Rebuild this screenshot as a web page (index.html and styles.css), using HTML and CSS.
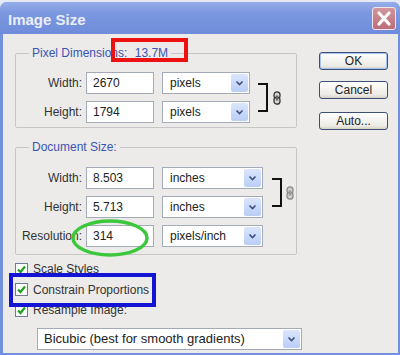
FILE: index.html
```html
<!DOCTYPE html>
<html>
<head>
<meta charset="utf-8">
<link rel="stylesheet" href="styles.css">
</head>
<body>
<div class="window">
  <div class="titlebar">
    <span class="title">Image Size</span>
    <span class="close">
      <svg width="24" height="23" viewBox="0 0 24 23">
        <path d="M7 6 L17 17 M17 6 L7 17" stroke="#fff" stroke-width="3.2" stroke-linecap="round"/>
      </svg>
    </span>
  </div>
  <div class="content">
    <div class="main">
      <fieldset class="group">
        <legend>Pixel Dimensions: <span class="size">13.7M</span></legend>
        <div class="linked pix">
          <div class="rows">
            <div class="row"><span class="label">Width:</span><span class="input">2670</span><span class="select">pixels<span class="arrow"><svg width="9" height="6" viewBox="0 0 9 6"><path d="M1.5 1.5 L4.5 4.5 L7.5 1.5" fill="none" stroke="#3c4f7a" stroke-width="1.6"/></svg></span></span></div>
            <div class="row"><span class="label">Height:</span><span class="input">1794</span><span class="select">pixels<span class="arrow"><svg width="9" height="6" viewBox="0 0 9 6"><path d="M1.5 1.5 L4.5 4.5 L7.5 1.5" fill="none" stroke="#3c4f7a" stroke-width="1.6"/></svg></span></span></div>
          </div>
          <span class="bracket"></span>
          <svg class="link" width="8" height="14" viewBox="0 0 8 14"><rect x="1" y="0.8" width="6" height="7" rx="3" fill="#d8d8d8" stroke="#333" stroke-width="1.3"/><rect x="1" y="6.2" width="6" height="7" rx="3" fill="#d8d8d8" stroke="#333" stroke-width="1.3"/><rect x="2.8" y="4.5" width="2.4" height="5" fill="#666"/></svg>
        </div>
      </fieldset>
      <fieldset class="group doc">
        <legend>Document Size:</legend>
        <div class="doc-inner">
          <div class="linked">
            <div class="rows">
              <div class="row"><span class="label">Width:</span><span class="input">8.503</span><span class="select wide">inches<span class="arrow"><svg width="9" height="6" viewBox="0 0 9 6"><path d="M1.5 1.5 L4.5 4.5 L7.5 1.5" fill="none" stroke="#3c4f7a" stroke-width="1.6"/></svg></span></span></div>
              <div class="row"><span class="label">Height:</span><span class="input">5.713</span><span class="select wide">inches<span class="arrow"><svg width="9" height="6" viewBox="0 0 9 6"><path d="M1.5 1.5 L4.5 4.5 L7.5 1.5" fill="none" stroke="#3c4f7a" stroke-width="1.6"/></svg></span></span></div>
            </div>
            <span class="bracket doc-bracket"></span>
            <svg class="link doc-link" width="8" height="14" viewBox="0 0 8 14"><rect x="1" y="0.8" width="6" height="7" rx="3" fill="#cfcfcf" stroke="#8a8a8a" stroke-width="1.3"/><rect x="1" y="6.2" width="6" height="7" rx="3" fill="#cfcfcf" stroke="#8a8a8a" stroke-width="1.3"/><rect x="2.8" y="4.5" width="2.4" height="5" fill="#9a9a9a"/></svg>
          </div>
          <div class="row"><span class="label">Resolution:</span><span class="input">314</span><span class="select wide">pixels/inch<span class="arrow"><svg width="9" height="6" viewBox="0 0 9 6"><path d="M1.5 1.5 L4.5 4.5 L7.5 1.5" fill="none" stroke="#3c4f7a" stroke-width="1.6"/></svg></span></span></div>
        </div>
      </fieldset>
      <div class="checks">
        <div class="check"><span class="box"><svg width="11" height="11" viewBox="0 0 11 11"><path d="M2 5.5 L4.5 8 L9 2.5" fill="none" stroke="#1fa01f" stroke-width="2.2"/></svg></span>Scale Styles</div>
        <div class="check"><span class="box"><svg width="11" height="11" viewBox="0 0 11 11"><path d="M2 5.5 L4.5 8 L9 2.5" fill="none" stroke="#1fa01f" stroke-width="2.2"/></svg></span>Constrain Proportions</div>
        <div class="check"><span class="box"><svg width="11" height="11" viewBox="0 0 11 11"><path d="M2 5.5 L4.5 8 L9 2.5" fill="none" stroke="#1fa01f" stroke-width="2.2"/></svg></span>Resample Image:</div>
      </div>
      <div class="select method">Bicubic (best for smooth gradients)<span class="arrow"><svg width="9" height="6" viewBox="0 0 9 6"><path d="M1.5 1.5 L4.5 4.5 L7.5 1.5" fill="none" stroke="#3c4f7a" stroke-width="1.6"/></svg></span></div>
    </div>
    <div class="buttons">
      <span class="btn default">OK</span>
      <span class="btn">Cancel</span>
      <span class="btn auto">Auto...</span>
    </div>
  </div>
</div>
<span class="mark red"></span>
<svg class="mark green" width="80" height="40" viewBox="0 0 80 40"><ellipse cx="40" cy="20" rx="37" ry="17" fill="none" stroke="#3cc83c" stroke-width="3.5"/></svg>
<span class="mark blue"></span>
</body>
</html>
```
FILE: styles.css
```css
html, body {
  margin: 0;
  padding: 0;
}
body {
  width: 400px;
  height: 355px;
  overflow: hidden;
  background: #e4e9f3;
  font-family: "Liberation Sans", Arial, sans-serif;
  font-size: 12px;
  color: #2a2a2a;
  position: relative;
}
.window {
  margin-top: 2px;
  height: 353px;
  box-sizing: border-box;
  background: #7390dc;
  border-radius: 7px 7px 0 0;
  padding: 0 2px 2px 3px;
  display: flex;
  flex-direction: column;
}
.titlebar {
  height: 32px;
  margin: 0 -2px 0 -3px;
  padding: 0 4px 0 8px;
  border-radius: 7px 7px 0 0;
  background: linear-gradient(#95ade9, #7b97df 35%, #6f8cdb);
  display: flex;
  align-items: center;
  justify-content: space-between;
}
.title {
  font-size: 15px;
  font-weight: bold;
  color: #e9eefa;
  text-shadow: 0 0 1px #7d95d6;
  padding-top: 2px;
}
.close {
  width: 24px;
  height: 23px;
  box-sizing: border-box;
  border: 1px solid #f3e6ea;
  border-radius: 3px;
  background: linear-gradient(#d3959c, #bb6d77);
  display: flex;
  align-items: center;
  justify-content: center;
}
.close svg { display: block; margin: -1px; }
.content {
  flex: 1;
  background: #ecebea;
  display: flex;
}
.main {
  width: 287px;
  padding: 12px 0 0 12px;
}
.group {
  margin: 0;
  width: 282px;
  box-sizing: border-box;
  padding: 0 0 4px 0;
  border: 1px solid #c6c6c6;
  border-radius: 2px;
}
.group legend {
  margin-left: 13px;
  padding: 0 3px;
  line-height: 14px;
  color: #3b54b3;
}
.size { margin-left: 4px; }
.doc { margin-top: 12px; padding-bottom: 7px; }
.linked {
  display: flex;
  align-items: center;
}
.pix { padding-top: 12px; }
.doc-inner {
  padding-top: 13px;
  display: flex;
  flex-direction: column;
  gap: 7px;
}
.rows {
  display: flex;
  flex-direction: column;
  gap: 7px;
}
.row {
  display: flex;
  align-items: center;
  height: 22px;
}
.label {
  width: 66px;
  margin-right: 4px;
  text-align: right;
  color: #333;
}
.input {
  width: 68px;
  height: 22px;
  box-sizing: border-box;
  border: 1px solid #a3aab8;
  background: #fff;
  padding-left: 6px;
  line-height: 20px;
  color: #222;
}
.select {
  position: relative;
  margin-left: 8px;
  width: 88px;
  height: 22px;
  box-sizing: border-box;
  border: 1px solid #a3aab8;
  background: #fff;
  padding-left: 7px;
  line-height: 20px;
  color: #222;
}
.select.wide { width: 101px; }
.arrow {
  position: absolute;
  right: 1px;
  top: 1px;
  width: 17px;
  height: 18px;
  border-radius: 2px;
  background: linear-gradient(#dbe6fc, #b9cdf6);
  display: flex;
  align-items: center;
  justify-content: center;
}
.arrow svg { display: block; }
.bracket {
  margin-left: 8px;
  width: 10px;
  height: 29px;
  box-sizing: border-box;
  border: 2px solid #111;
  border-left: none;
}
.link { display: block; margin-left: 5px; }
.doc-bracket { margin-left: 9px; }
.doc-link { margin-left: 4px; }
.checks {
  margin-top: 4px;
}
.check {
  height: 20.5px;
  display: flex;
  align-items: center;
  color: #333;
}
.box {
  width: 13px;
  height: 13px;
  box-sizing: border-box;
  border: 1px solid #6d7d96;
  background: #fff;
  margin-right: 5px;
  display: flex;
  align-items: center;
  justify-content: center;
}
.box svg { display: block; }
.method {
  margin-left: 22px;
  margin-top: 7px;
  width: 265px;
  height: 22px;
  font-size: 13px;
  padding-left: 6px;
}
.buttons {
  margin-left: 17px;
  padding-top: 18px;
  display: flex;
  flex-direction: column;
}
.btn {
  width: 69px;
  height: 18px;
  box-sizing: border-box;
  border: 1px solid #3d4f73;
  border-radius: 3px;
  background: linear-gradient(#ffffff, #ecebe6 80%, #d6d0c5);
  text-align: center;
  line-height: 16px;
  color: #222;
  margin-bottom: 11px;
}
.btn.default {
  box-shadow: inset 0 0 0 1px #a9c3f0;
}
.btn.auto { margin-top: 2px; }
.mark {
  position: absolute;
  box-sizing: border-box;
}
.red {
  left: 111px;
  top: 38px;
  width: 77px;
  height: 24px;
  border: 4px solid #ee1111;
}
.green {
  left: 70px;
  top: 218px;
}
.blue {
  left: 9px;
  top: 273px;
  width: 147px;
  height: 34px;
  border: 4px solid #1414d4;
}
```
